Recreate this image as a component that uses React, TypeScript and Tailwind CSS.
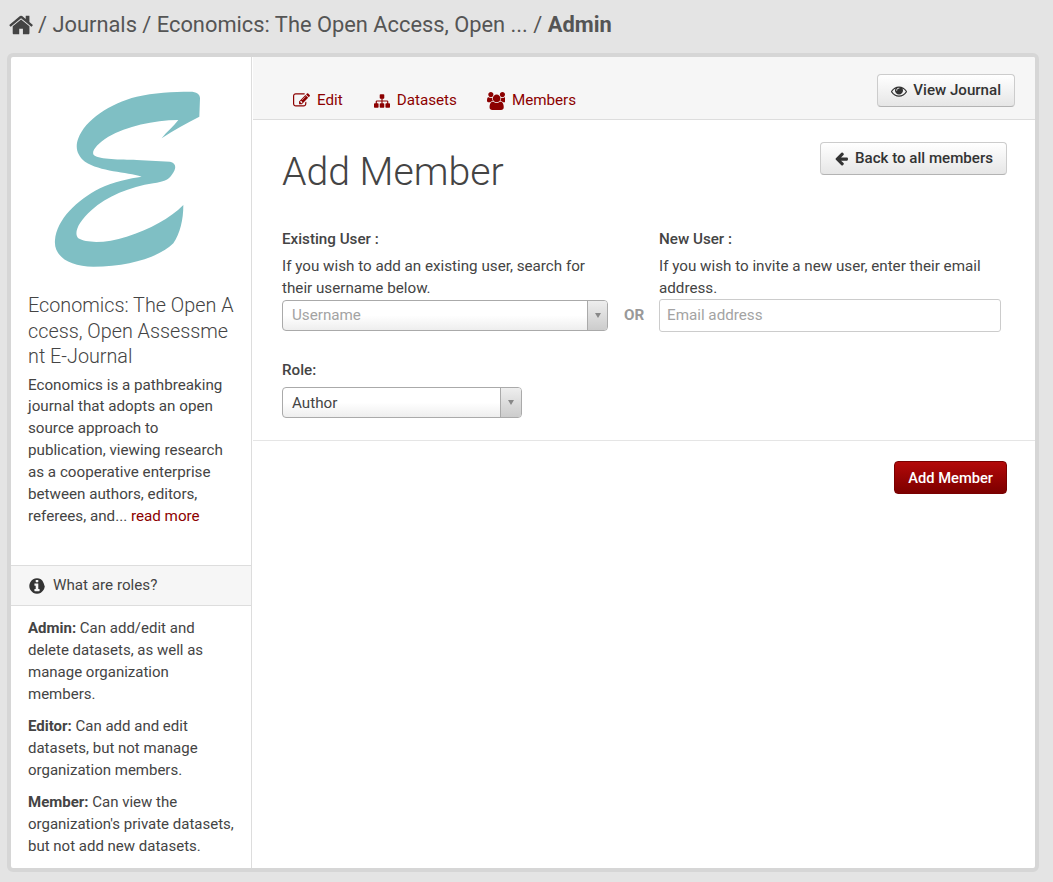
const ICON_PATHS = {
  home: 'M1408 992v480q0 26-19 45t-45 19h-384v-384h-256v384h-384q-26 0-45-19t-19-45v-480q0-1 .5-3t.5-3l575-474 575 474q1 2 1 6zm223-69l-62 74q-8 9-21 11h-3q-13 0-21-7l-692-577-692 577q-12 8-24 7-13-2-21-11l-62-74q-8-10-7-23.5t11-21.5l719-599q32-26 76-26t76 26l244 204v-195q0-14 9-23t23-9h192q14 0 23 9t9 23v408l219 182q10 8 11 21.5t-7 23.5z',
  edit: 'M888 1184l116-116-152-152-116 116v56h96v96h56zm440-720q-16-16-33 1l-350 350q-17 17-1 33t33-1l350-350q17-17 1-33zm80 594v190q0 119-84.5 203.5t-203.5 84.5h-832q-119 0-203.5-84.5t-84.5-203.5v-832q0-119 84.5-203.5t203.5-84.5h832q63 0 117 25 15 7 18 23 3 17-9 29l-49 49q-14 14-32 8-23-6-45-6h-832q-66 0-113 47t-47 113v832q0 66 47 113t113 47h832q66 0 113-47t47-113v-126q0-13 9-22l64-64q15-15 35-7t20 29zm-96-738l288 288-672 672h-288v-288zm444 132l-92 92-288-288 92-92q28-28 68-28t68 28l152 152q28 28 28 68t-28 68z',
  sitemap: 'M1792 1248v320q0 40-28 68t-68 28h-320q-40 0-68-28t-28-68v-320q0-40 28-68t68-28h96v-192h-512v192h96q40 0 68 28t28 68v320q0 40-28 68t-68 28h-320q-40 0-68-28t-28-68v-320q0-40 28-68t68-28h96v-192h-512v192h96q40 0 68 28t28 68v320q0 40-28 68t-68 28h-320q-40 0-68-28t-28-68v-320q0-40 28-68t68-28h96v-192q0-52 38-90t90-38h512v-192h-96q-40 0-68-28t-28-68v-320q0-40 28-68t68-28h320q40 0 68 28t28 68v320q0 40-28 68t-68 28h-96v192h512q52 0 90 38t38 90v192h96q40 0 68 28t28 68z',
  users: 'M593 896q-162 5-265 128h-134q-82 0-138-40.5t-56-118.5q0-353 124-353 6 0 43.5 21t97.5 42.5 119 21.5q67 0 133-23-5 37-5 66 0 139 81 256zm1071 637q0 120-73 189.5t-194 69.5h-874q-121 0-194-69.5t-73-189.5q0-53 3.5-103.5t14-109 26.5-108.5 43-97.5 62-81 85.5-53.5 111.5-20q10 0 43 21.5t73 48 107 48 135 21.5 135-21.5 107-48 73-48 43-21.5q61 0 111.5 20t85.5 53.5 62 81 43 97.5 26.5 108.5 14 109 3.5 103.5zm-1024-1277q0 106-75 181t-181 75-181-75-75-181 75-181 181-75 181 75 75 181zm704 384q0 159-112.5 271.5t-271.5 112.5-271.5-112.5-112.5-271.5 112.5-271.5 271.5-112.5 271.5 112.5 112.5 271.5zm576 225q0 78-56 118.5t-138 40.5h-134q-103-123-265-128 81-117 81-256 0-29-5-66 66 23 133 23 59 0 119-21.5t97.5-42.5 43.5-21q124 0 124 353zm-128-609q0 106-75 181t-181 75-181-75-75-181 75-181 181-75 181 75 75 181z',
  eye: 'M1664 960q-152-236-381-353 61 104 61 225 0 185-131.5 316.5t-316.5 131.5-316.5-131.5-131.5-316.5q0-121 61-225-229 117-381 353 133 205 333.5 326.5t434.5 121.5 434.5-121.5 333.5-326.5zm-720-384q0-20-14-34t-34-14q-125 0-214.5 89.5t-89.5 214.5q0 20 14 34t34 14 34-14 14-34q0-86 61-147t147-61q20 0 34-14t14-34zm848 384q0 34-20 69-140 230-376.5 368.5t-499.5 138.5-499.5-139-376.5-368q-20-35-20-69t20-69q140-229 376.5-368t499.5-139 499.5 139 376.5 368q20 35 20 69z',
  arrowLeft: 'M1664 896v128q0 53-32.5 90.5t-84.5 37.5h-704l293 294q38 36 38 90t-38 90l-75 76q-37 37-90 37-52 0-91-37l-651-652q-37-37-37-90 0-52 37-91l651-650q38-38 91-38 52 0 90 38l75 74q38 38 38 91t-38 91l-293 293h704q52 0 84.5 37.5t32.5 90.5z',
  info: 'M1152 1376v-160q0-14-9-23t-23-9h-96v-512q0-14-9-23t-23-9h-320q-14 0-23 9t-9 23v160q0 14 9 23t23 9h96v320h-96q-14 0-23 9t-9 23v160q0 14 9 23t23 9h448q14 0 23-9t9-23zm-128-896v-160q0-14-9-23t-23-9h-192q-14 0-23 9t-9 23v160q0 14 9 23t23 9h192q14 0 23-9t9-23zm640 416q0 209-103 385.5t-279.5 279.5-385.5 103-385.5-103-279.5-279.5-103-385.5 103-385.5 279.5-279.5 385.5-103 385.5 103 279.5 385.5 103 385.5z',
};

function Icon({ name, size, className }: { name: keyof typeof ICON_PATHS; size: number; className?: string }) {
  return (
    <svg viewBox="0 0 1792 1792" width={size} height={size} fill="currentColor" className={`shrink-0 ${className ?? ''}`}>
      <path d={ICON_PATHS[name]} />
    </svg>
  );
}

const TABS = [
  { label: 'Edit', icon: <Icon name="edit" size={17} />, nudge: '' },
  { label: 'Datasets', icon: <Icon name="sitemap" size={16} />, nudge: '' },
  { label: 'Members', icon: <Icon name="users" size={18} />, nudge: 'ml-[-1px]' },
];

function Logo() {
  return (
    <svg viewBox="0 0 660 630" className="ml-[9px] mt-[13px] h-[210px] w-[220px] shrink-0">
      <path
        fill="#7fbfc4"
        d="M510 65C530 65 540 72 540 85L538 140C500 160 460 180 425 205C440 185 460 170 475 150C400 150 320 170 265 200C230 222 212 245 222 256C240 270 300 268 350 270L450 275C470 280 470 295 455 315C445 330 430 335 400 340C330 350 260 380 215 420C175 455 160 490 175 505C200 520 260 520 320 500C390 478 450 445 490 405C490 450 480 490 460 520C420 560 330 590 220 590C150 590 100 560 105 510C110 450 170 390 240 355C280 335 330 325 365 320C320 305 240 305 195 275C170 255 165 230 175 205C195 150 270 100 350 80C400 68 460 65 510 65Z"
      />
    </svg>
  );
}

function SelectBox({ label, width, placeholder }: { label: string; width: string; placeholder?: boolean }) {
  return (
    <div
      className={`flex h-[31px] items-stretch rounded-[4px] border border-[#aaa] bg-gradient-to-b from-white from-50% to-[#eee] ${width}`}
    >
      <span className={`flex-1 pl-[9px] ${placeholder ? 'leading-[29px] text-[#a3a3a3]' : 'leading-[30px] text-[#444]'}`}>
        {label}
      </span>
      <span
        className={`flex items-center justify-center rounded-r-[3px] border-l border-[#aaa] bg-gradient-to-b from-[#eee] to-[#ccc] ${placeholder ? 'w-[20px]' : 'w-[21px]'}`}
      >
        <span className="h-0 w-0 border-x-[3px] border-t-[5px] border-x-transparent border-t-[#888]" />
      </span>
    </div>
  );
}

function GrayButton({ icon, label, gap }: { icon: React.ReactNode; label: string; gap: string }) {
  return (
    <button
      type="button"
      className={`flex h-[33px] items-center rounded-[4px] border border-[#ccc] border-b-[#b3b3b3] bg-gradient-to-b from-white to-[#e6e6e6] px-[13px] text-[15.1px] font-medium text-[#333] ${gap}`}
    >
      {icon}
      {label}
    </button>
  );
}

export default function App() {
  return (
    <div
      className="min-h-[882px] bg-[#e4e4e4] px-[7px] text-[15.2px] leading-[21.85px] text-[#444]"
      style={{ fontFamily: 'Roboto, "Liberation Sans", sans-serif' }}
    >
      <div className="flex h-[53px] items-center gap-[3px] pb-[4px] pl-[2px] text-[21.85px] text-[#555]">
        <Icon name="home" size={26} className="text-[#444]" />
        <span className="whitespace-pre">/ Journals / Economics: The Open Access, Open ... / </span>
        <strong className="ml-[-3px] font-bold">Admin</strong>
      </div>

      <div className="flex h-[819px] w-[1032px] overflow-hidden rounded-[6px] border-[4px] border-[#d6d6d6] bg-white">
        <aside className="flex w-[241px] shrink-0 flex-col border-r border-[#ddd]">
          <Logo />
          <div className="mt-[13px] pl-[17px] pr-[15px]">
            <h2 className="break-all text-[19.8px] font-light leading-[25.5px]">
              Economics: The Open Access, Open Assessment E-Journal
            </h2>
            <p className="mt-[5px] pr-[2px]">
              Economics is a pathbreaking journal that adopts an open source approach to publication, viewing research
              as a cooperative enterprise between authors, editors, referees, and...{' '}
              <a className="text-[#8c0000]">read more</a>
            </p>
          </div>
          <div className="mt-[38px] flex h-[41px] shrink-0 items-center gap-[7px] border-y border-[#ddd] bg-[#f6f6f6] px-[17px]">
            <Icon name="info" size={18} className="text-[#333]" />
            <span>What are roles?</span>
          </div>
          <div className="flex flex-col gap-[10.5px] pl-[17px] pr-[14px] pt-[12px] text-[15px]">
            <p>
              <strong className="font-bold">Admin:</strong> Can add/edit and delete datasets, as well as manage
              organization members.
            </p>
            <p>
              <strong className="font-bold">Editor:</strong> Can add and edit datasets, but not manage organization
              members.
            </p>
            <p>
              <strong className="font-bold">Member:</strong> Can view the organization's private datasets, but not add
              new datasets.
            </p>
          </div>
        </aside>

        <main className="ml-[1px] flex-1">
          <div className="flex h-[63px] items-start justify-between border-b border-[#ddd] bg-[#f6f6f6] pr-[20px] pt-[17px]">
            <nav className="mt-[16px] flex gap-[31px] pl-[40px] text-[#8c0000]">
              {TABS.map((tab) => (
                <a key={tab.label} className={`flex items-center gap-[7px] ${tab.nudge}`}>
                  {tab.icon}
                  {tab.label}
                </a>
              ))}
            </nav>
            <GrayButton icon={<Icon name="eye" size={16} />} label="View Journal" gap="gap-[6px]" />
          </div>

          <div className="flex items-start justify-between pl-[29px] pr-[28px] pt-[22px]">
            <h1 className="mt-[5px] text-[39.2px] font-light leading-[50px]">Add Member</h1>
            <GrayButton icon={<Icon name="arrowLeft" size={15} />} label="Back to all members" gap="gap-[6px]" />
          </div>

          <div className="flex pl-[29px] pt-[32px]">
            <div className="w-[326px]">
              <label className="block font-medium">Existing User :</label>
              <p className="mt-[5px]">If you wish to add an existing user, search for their username below.</p>
              <SelectBox label="Username" width="w-[326px]" placeholder />
            </div>
            <span className="mt-[76px] w-[51px] pl-[16px] font-bold text-[#999]">OR</span>
            <div className="w-[342px]">
              <label className="block font-medium">New User :</label>
              <p className="mt-[5px]">If you wish to invite a new user, enter their email address.</p>
              <input
                placeholder="Email address"
                className="mt-[-1px] h-[33px] w-full rounded-[3px] border border-[#ccc] px-[7px] placeholder:text-[#a3a3a3]"
              />
            </div>
          </div>

          <div className="pl-[29px] pt-[28px]">
            <label className="block font-medium">Role:</label>
            <div className="mt-[6px]">
              <SelectBox label="Author" width="w-[240px]" />
            </div>
          </div>

          <div className="mt-[22px] flex justify-end border-t border-[#e5e5e5] pr-[28px] pt-[20px]">
            <button
              type="button"
              className="h-[33px] rounded-[4px] border border-[#7a0000] bg-gradient-to-b from-[#b30a0a] to-[#7d0000] px-[13px] pt-[2px] text-[14.7px] font-medium text-white"
            >
              Add Member
            </button>
          </div>
        </main>
      </div>
    </div>
  );
}
